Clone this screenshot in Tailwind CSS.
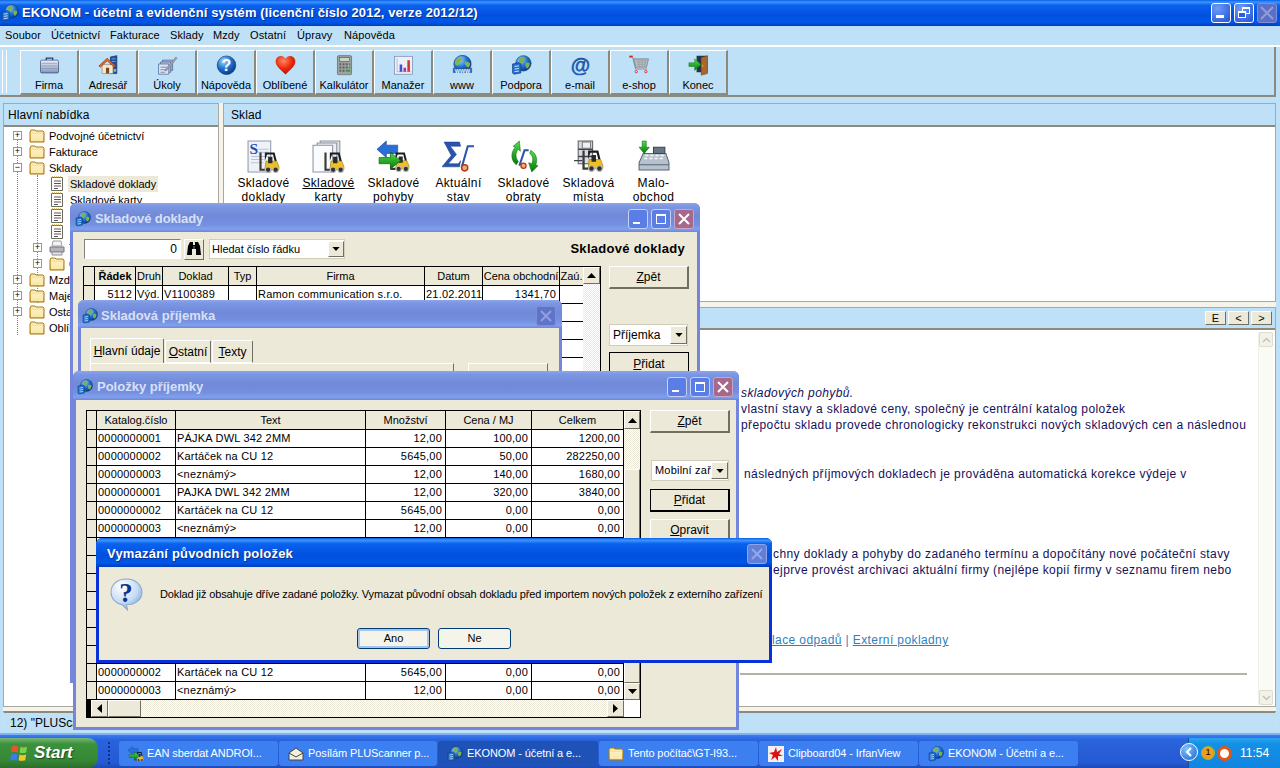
<!DOCTYPE html>
<html lang="cs">
<head>
    <meta charset="UTF-8">
    <title>EKONOM - účetní a evidenční systém</title>
    <script src="https://cdn.jsdelivr.net/npm/@tailwindcss/browser@4"></script>
</head>
<body class="bg-[#bfe1f8]">

<!-- icon sheet -->
<svg class="absolute w-0 h-0">
    <defs>
        <radialGradient id="gBlue" cx="35%" cy="28%" r="80%"><stop offset="0" stop-color="#a9d8fb"/><stop offset=".5" stop-color="#1f74cf"/><stop offset="1" stop-color="#0a3278"/></radialGradient>
        <radialGradient id="gRed" cx="40%" cy="25%" r="85%"><stop offset="0" stop-color="#ff8a60"/><stop offset=".5" stop-color="#ee2a10"/><stop offset="1" stop-color="#a80a00"/></radialGradient>
        <radialGradient id="gBubble" cx="35%" cy="25%" r="85%"><stop offset="0" stop-color="#ffffff"/><stop offset=".6" stop-color="#c5dcf5"/><stop offset="1" stop-color="#6f9fd8"/></radialGradient>
        <linearGradient id="gCase" x1="0" y1="0" x2="0" y2="1"><stop offset="0" stop-color="#eef2f9"/><stop offset="1" stop-color="#8296bb"/></linearGradient>
        <linearGradient id="gFolder" x1="0" y1="0" x2="0" y2="1"><stop offset="0" stop-color="#fff3bf"/><stop offset="1" stop-color="#eeb93f"/></linearGradient>
        <linearGradient id="gGreen" x1="0" y1="0" x2="0" y2="1"><stop offset="0" stop-color="#4fe04f"/><stop offset="1" stop-color="#067a06"/></linearGradient>

        <symbol id="appicon" viewBox="0 0 32 32">
            <circle cx="19" cy="13" r="12" fill="url(#gBlue)" stroke="#0b3b7c"/>
            <path d="M13 5c3-2 6-2 8 0 1 2-1 3-2 5s-3 3-5 2-3-5-1-7zM23 12c2-1 5 0 6 1 0 4-2 7-4 8-2-1-3-3-3-5s0-3 1-4z" fill="#7fb050"/>
            <path d="M2 14l10-2 3 2v14l-11 2-2-2z" fill="#1f6fd0" stroke="#0b3b7c"/>
            <path d="M5 18l7-1M5 22l7-1M5 26l7-1" stroke="#cfe6ff" stroke-width="1.5"/>
        </symbol>
        <symbol id="folder" viewBox="0 0 16 16">
            <path d="M1 4l1-2h4l1 1h7l1 1v10H1z" fill="url(#gFolder)" stroke="#a67a12"/>
            <path d="M2 6h12v7H2z" fill="#fff7d0" opacity=".7"/>
        </symbol>
        <symbol id="note" viewBox="0 0 14 16">
            <path d="M1.5 1.5h11v13h-11z" fill="#fff" stroke="#6b6b60"/>
            <path d="M2 1h1M4 1h1M6 1h1M8 1h1M10 1h1" stroke="#c9a23a" stroke-width="1.4"/>
            <path d="M4 5h7M4 7.5h7M4 10h7M4 12.5h4" stroke="#55554c"/>
        </symbol>
        <symbol id="printer" viewBox="0 0 16 16">
            <path d="M4 1h8l1 5H3z" fill="#f2f2f4" stroke="#a0a0a8"/>
            <path d="M1 7h14v5H1z" fill="#b5b5bd" stroke="#77777f"/>
            <path d="M3 12h10v3H3z" fill="#e5e5e8" stroke="#8e8e96"/>
        </symbol>
        <symbol id="case" viewBox="0 0 32 32">
            <path d="M11 8V5h10v3" fill="none" stroke="#2c3f6a" stroke-width="2"/>
            <rect x="2" y="8" width="28" height="20" rx="2" fill="url(#gCase)" stroke="#263a66"/>
            <path d="M4 13h24M4 17h24M4 21h24" stroke="#7f90b0"/>
        </symbol>
        <symbol id="house" viewBox="0 0 32 32">
            <path d="M19 3l10-2v28H19z" fill="#1c4f9f" stroke="#0e2e66"/>
            <path d="M21 6h6M21 10h6" stroke="#6ea3e0" stroke-width="1.5"/>
            <path d="M6 15h17v14H6z" fill="#f4ead4" stroke="#8f8168"/>
            <path d="M1 17L14 5l13 12-2 2L14 9 3 19z" fill="#e8692a" stroke="#8e3410"/>
            <path d="M12 20h5v9h-5z" fill="#7a4a25"/>
            <path d="M24 22h4v4h-4z" fill="#88c070"/>
        </symbol>
        <symbol id="tasks" viewBox="0 0 32 32">
            <path d="M8 8h16v16H8z" fill="#9fb1d6" stroke="#3f5688"/>
            <path d="M5 11h16v16H5z" fill="#bac8e4" stroke="#3f5688"/>
            <path d="M2 14h16v16H2z" fill="#dbe4f4" stroke="#3f5688"/>
            <path d="M5 19h10M5 23h10M5 27h7" stroke="#4b628f"/>
            <path d="M13 22L29 3l2 2-16 19-3 1z" fill="#a0a4ac" stroke="#5f636c" stroke-width=".6"/>
        </symbol>
        <symbol id="help" viewBox="0 0 32 32">
            <circle cx="16" cy="16" r="14.5" fill="url(#gBlue)" stroke="#0a357e"/>
            <text x="16" y="25" text-anchor="middle" font-family="Liberation Sans" font-weight="700" font-size="25" fill="#fff">?</text>
        </symbol>
        <symbol id="heart" viewBox="0 0 32 32">
            <path d="M16 30C8 22 1 17 1 10c0-5 4-8 8-8 3 0 6 2 7 5 1-3 4-5 7-5 4 0 8 3 8 8 0 7-7 12-15 20z" fill="url(#gRed)" stroke="#b81c08" stroke-width=".6"/>
        </symbol>
        <symbol id="calc" viewBox="0 0 32 32">
            <rect x="5" y="1" width="22" height="30" rx="2" fill="#9ea3a2" stroke="#55595a"/>
            <rect x="8" y="4" width="16" height="6" fill="#c9d4c4" stroke="#55595a"/>
            <path d="M8 13h3v3H8zM13 13h3v3h-3zM18 13h3v3h-3zM8 18h3v3H8zM13 18h3v3h-3zM18 18h3v3h-3zM8 23h3v3H8zM13 23h3v3h-3z" fill="#5c6160"/>
            <path d="M23 13h2v3h-2zM23 18h2v3h-2zM18 23h7v3h-7z" fill="#2f9a4a"/>
        </symbol>
        <symbol id="chart" viewBox="0 0 32 32">
            <rect x="2" y="2" width="28" height="28" fill="#eceff7" stroke="#6e7ea8"/>
            <path d="M6 5v21h22" fill="none" stroke="#9aa6c4"/>
            <path d="M10 15h4v11h-4z" fill="#3a53c4"/>
            <path d="M16 20h4v6h-4z" fill="#b12bb0"/>
            <path d="M22 8h4v18h-4z" fill="#d8342a"/>
        </symbol>
        <symbol id="www" viewBox="0 0 32 32">
            <circle cx="16" cy="14" r="13.5" fill="url(#gBlue)" stroke="#0b3b7c"/>
            <path d="M7 6c3-2 6-2 9 0 1 2-1 3-3 4s-2 5-4 6-5-1-5-3 1-5 3-7zM20 11c3-1 6 0 8 2 0 3-1 5-3 7-2-1-4-3-5-5s-1-3 0-4z" fill="#83b352"/>
            <rect x="1" y="20" width="30" height="8" fill="#1b5ca8" opacity=".85"/>
            <text x="16" y="27.5" text-anchor="middle" font-family="Liberation Sans" font-weight="700" font-size="10" fill="#e8f4ff">www</text>
        </symbol>
        <symbol id="at" viewBox="0 0 32 32">
            <text x="16" y="26" text-anchor="middle" font-family="Liberation Sans" font-weight="700" font-size="31" fill="#1a63c0" stroke="#0a2f72" stroke-width=".5">@</text>
        </symbol>
        <symbol id="cart" viewBox="0 0 32 32">
            <path d="M1 2h4l5 20h18" fill="none" stroke="#8a9096" stroke-width="1.6"/>
            <path d="M7 6h23l-3 13H10z" fill="#b6bbc1" stroke="#6e747a"/>
            <path d="M11 9h16M12 12h14M12 15h13M14 6l2 13M20 6v13M26 6l-2 13" stroke="#8c9298" stroke-width=".7"/>
            <path d="M0 1h5v3H0z" fill="#e02020"/>
            <circle cx="11" cy="26" r="1.8" fill="#fff" stroke="#d81818" stroke-width="1.4"/>
            <circle cx="26" cy="26" r="1.8" fill="#fff" stroke="#d81818" stroke-width="1.4"/>
        </symbol>
        <symbol id="door" viewBox="0 0 32 32">
            <path d="M13 1h17v26H13z" fill="#24344f"/>
            <path d="M20 4l10-3v28l-10 3z" fill="#a7672d" stroke="#5f3712" stroke-width=".6"/>
            <circle cx="22.5" cy="17" r="1" fill="#ffd76a"/>
            <path d="M1 12h9V6l10 9-10 9v-6H1z" fill="url(#gGreen)" stroke="#056005" stroke-width=".6"/>
        </symbol>
        <symbol id="fork" viewBox="0 0 20 20">
            <path d="M6 1h9l2 8h-2l-1.500-6H8L6 9z" fill="#1c1c1c"/>
            <path d="M7 9h10l2 5v3H6z" fill="#f0c020" stroke="#8a6a00" stroke-width=".5"/>
            <path d="M9 5h4v6H9z" fill="#2a2a2a"/>
            <path d="M1 1h2v15h3v2H1z" fill="#3a3a3a"/>
            <circle cx="9" cy="17" r="2.500" fill="#333" stroke="#bbb"/>
            <circle cx="16" cy="17" r="2.500" fill="#333" stroke="#bbb"/>
        </symbol>
        <symbol id="skdoc" viewBox="0 0 32 32">
            <path d="M1 1h22v30H1z" fill="#eef2f7" stroke="#8d9aae"/>
            <path d="M11 9h10M11 12h10M4 16h17M4 19h12M4 22h12" stroke="#b8c4d6"/>
            <text x="2.500" y="14" font-family="Liberation Serif" font-weight="700" font-size="15" fill="#1f4fb0">S</text>
            <use href="#fork" x="11" y="11" width="21" height="21"/>
        </symbol>
        <symbol id="skcard" viewBox="0 0 32 32">
            <path d="M8 1h19v24H8z" fill="#dfe3ea" stroke="#8d93a0"/>
            <path d="M5 3h19v25H5z" fill="#eceff4" stroke="#8d93a0"/>
            <path d="M1 5h19v26H1z" fill="#fafbfd" stroke="#8d93a0"/>
            <use href="#fork" x="11" y="11" width="21" height="21"/>
        </symbol>
        <symbol id="skmove" viewBox="0 0 32 32">
            <path d="M0 9l9-8v4h11v8H9v4z" fill="#2a6fd8" stroke="#0f3f90" stroke-width=".6"/>
            <use href="#fork" x="12" y="11" width="20" height="20"/>
            <path d="M2 17h11v-5l10 8-10 8v-5H2z" fill="url(#gGreen)" stroke="#056005" stroke-width=".6"/>
        </symbol>
        <symbol id="sigma" viewBox="0 0 32 32">
            <path d="M2 2h15l1 4H8l6 8-8 9h10l2-3-1 6H0l9-11z" fill="#2a55ae" stroke="#14357c" stroke-width=".5"/>
            <path d="M19 27L25 6h6" fill="none" stroke="#2a55ae" stroke-width="2"/>
            <circle cx="22" cy="27" r="3" fill="#e8b070" stroke="#b8341a" stroke-width="1.4"/>
        </symbol>
        <symbol id="turnover" viewBox="0 0 32 32">
            <path d="M12 1L6 6l2 1C3 13 4 20 9 24l2-3C8 17 8 12 11 9l2 2z" fill="url(#gGreen)" stroke="#056005" stroke-width=".5"/>
            <path d="M24 31l6-6-2-1c2-6 0-11-5-14l-1 3c3 2 4 6 2 10l-3-1z" fill="url(#gGreen)" stroke="#056005" stroke-width=".5"/>
            <path d="M12 25l5-15h4" fill="none" stroke="#2a55ae" stroke-width="2"/>
            <circle cx="16" cy="25" r="2.500" fill="#e8b070" stroke="#b8341a" stroke-width="1.2"/>
        </symbol>
        <symbol id="shelf" viewBox="0 0 32 32">
            <path d="M6 1h14v22H6z" fill="#d8dbe0" stroke="#5a5e66"/>
            <path d="M6 9h14M6 16h14M2 20h8" stroke="#3e4148" stroke-width="1.300"/>
            <path d="M10 2h8v6h-8z" fill="#eef0f4" stroke="#777"/>
            <use href="#fork" x="9" y="9" width="22" height="22"/>
        </symbol>
        <symbol id="till" viewBox="0 0 32 32">
            <path d="M2 22l4-9h22l3 9v7H2z" fill="#b8c2ce" stroke="#5a6676"/>
            <path d="M16 7h11v6H16z" fill="#687584" stroke="#3a4450"/>
            <path d="M8 15h3M13 15h3M18 15h3M23 15h3M7 18h3M12 18h3M17 18h3M22 18h3" stroke="#f4f6fa" stroke-width="1.500"/>
            <path d="M2 24h29" stroke="#5a6676"/>
            <path d="M5 1h4v6h3l-5 6-5-6h3z" fill="url(#gGreen)" stroke="#056005" stroke-width=".5"/>
        </symbol>
        <symbol id="binoc" viewBox="0 0 16 16">
            <path d="M2 5l2-4h3v3h2V1h3l2 4 1 9H10V8H6v6H1z" fill="#000"/>
            <path d="M7 5h2v3H7z" fill="#444"/>
        </symbol>
        <symbol id="bubble" viewBox="0 0 32 32">
            <path d="M16 1C7 1 1 6 1 14c0 6 5 11 11 12l5 5-1-5c8 0 15-5 15-12S25 1 16 1z" fill="url(#gBubble)" stroke="#8aa8cc"/>
            <text x="15.500" y="23" text-anchor="middle" font-family="Liberation Serif" font-weight="700" font-size="26" fill="#12318f">?</text>
        </symbol>
        <symbol id="down" viewBox="0 0 9 5"><path d="M0 0h9L4.500 5z" fill="#000"/></symbol>
        <symbol id="up" viewBox="0 0 9 5"><path d="M0 5h9L4.500 0z" fill="#000"/></symbol>
    </defs>
</svg>

<div class="relative w-[1280px] h-[768px] overflow-hidden flex flex-col font-['Liberation_Sans',sans-serif] text-[11px] text-black">

    <!-- Application title bar -->
    <div class="h-[26px] shrink-0 flex items-center pl-[1px] pr-[3px] bg-[linear-gradient(180deg,#0a5fe8_0%,#3d95ff_8%,#0a62ee_20%,#0050dd_60%,#0058e8_85%,#003dbb_100%)]">
        <svg class="w-[18px] h-[18px] mr-[3px]"><use href="#appicon"/></svg>
        <span class="text-white font-bold text-[13px] tracking-[0.1px] [text-shadow:1px_1px_0_#0a2f90]">EKONOM - účetní a evidenční systém (licenční číslo 2012, verze 2012/12)</span>
        <div class="ml-auto flex gap-[3px]">
            <div class="w-[20px] h-[20px] rounded-[3px] border border-white bg-[radial-gradient(circle_at_30%_25%,#6f9cf5,#1f52d8)] flex items-end p-[4px]"><div class="w-[8px] h-[3px] bg-white"></div></div>
            <div class="relative w-[20px] h-[20px] rounded-[3px] border border-white bg-[radial-gradient(circle_at_30%_25%,#6f9cf5,#1f52d8)]">
                <div class="absolute left-[7px] top-[3px] w-[8px] h-[7px] border border-white border-t-2"></div>
                <div class="absolute left-[3px] top-[7px] w-[8px] h-[7px] border border-white border-t-2 bg-[#2a5edc]"></div>
            </div>
            <div class="w-[20px] h-[20px] rounded-[3px] border border-[#7f90d8] bg-[#5a6fc8] flex items-center justify-center">
                <svg class="w-[14px] h-[14px]" viewBox="0 0 14 14"><path d="M1 1l12 12M13 1L1 13" stroke="#8f9ed8" stroke-width="2"/></svg>
            </div>
        </div>
    </div>

    <!-- Menu -->
    <div class="h-[19px] shrink-0 flex items-center pl-[5px] tracking-[0.1px]">
        <span class="w-[46px]">Soubor</span>
        <span class="w-[59px]">Účetnictví</span>
        <span class="w-[60px]">Fakturace</span>
        <span class="w-[43px]">Sklady</span>
        <span class="w-[37px]">Mzdy</span>
        <span class="w-[47px]">Ostatní</span>
        <span class="w-[47px]">Úpravy</span>
        <span>Nápověda</span>
    </div>
    <div class="h-[2px] shrink-0 bg-white"></div>

    <!-- Toolbar -->
    <div class="h-[50px] shrink-0 mr-[4px] flex pt-[3px] pb-[2px] border-r-2 border-b-2 border-[#8c8a7c] relative">
        <div class="w-[5px] ml-[2px] mr-[13px] border-x border-white"></div>
        <div id="toolbar" class="flex">
            <a class="w-[59px] h-[45px] flex flex-col items-center border-t border-l border-white border-r-2 border-r-[#8c8a7c] border-b-2 border-b-[#8c8a7c]"><svg class="w-[27px] h-[27px] mt-[4px]"><use href="#case"/></svg><span class="mt-[1px]">Firma</span></a>
            <a class="w-[59px] h-[45px] flex flex-col items-center border-t border-l border-white border-r-2 border-r-[#8c8a7c] border-b-2 border-b-[#8c8a7c]"><svg class="w-[27px] h-[27px] mt-[4px]"><use href="#house"/></svg><span class="mt-[1px]">Adresář</span></a>
            <a class="w-[59px] h-[45px] flex flex-col items-center border-t border-l border-white border-r-2 border-r-[#8c8a7c] border-b-2 border-b-[#8c8a7c]"><svg class="w-[27px] h-[27px] mt-[4px]"><use href="#tasks"/></svg><span class="mt-[1px]">Úkoly</span></a>
            <a class="w-[59px] h-[45px] flex flex-col items-center border-t border-l border-white border-r-2 border-r-[#8c8a7c] border-b-2 border-b-[#8c8a7c]"><svg class="w-[27px] h-[27px] mt-[4px]"><use href="#help"/></svg><span class="mt-[1px]">Nápověda</span></a>
            <a class="w-[59px] h-[45px] flex flex-col items-center border-t border-l border-white border-r-2 border-r-[#8c8a7c] border-b-2 border-b-[#8c8a7c]"><svg class="w-[27px] h-[27px] mt-[4px]"><use href="#heart"/></svg><span class="mt-[1px]">Oblíbené</span></a>
            <a class="w-[59px] h-[45px] flex flex-col items-center border-t border-l border-white border-r-2 border-r-[#8c8a7c] border-b-2 border-b-[#8c8a7c]"><svg class="w-[27px] h-[27px] mt-[4px]"><use href="#calc"/></svg><span class="mt-[1px]">Kalkulátor</span></a>
            <a class="w-[59px] h-[45px] flex flex-col items-center border-t border-l border-white border-r-2 border-r-[#8c8a7c] border-b-2 border-b-[#8c8a7c]"><svg class="w-[27px] h-[27px] mt-[4px]"><use href="#chart"/></svg><span class="mt-[1px]">Manažer</span></a>
            <a class="w-[59px] h-[45px] flex flex-col items-center border-t border-l border-white border-r-2 border-r-[#8c8a7c] border-b-2 border-b-[#8c8a7c]"><svg class="w-[27px] h-[27px] mt-[4px]"><use href="#www"/></svg><span class="mt-[1px]">www</span></a>
            <a class="w-[59px] h-[45px] flex flex-col items-center border-t border-l border-white border-r-2 border-r-[#8c8a7c] border-b-2 border-b-[#8c8a7c]"><svg class="w-[27px] h-[27px] mt-[4px]"><use href="#appicon"/></svg><span class="mt-[1px]">Podpora</span></a>
            <a class="w-[59px] h-[45px] flex flex-col items-center border-t border-l border-white border-r-2 border-r-[#8c8a7c] border-b-2 border-b-[#8c8a7c]"><svg class="w-[27px] h-[27px] mt-[4px]"><use href="#at"/></svg><span class="mt-[1px]">e-mail</span></a>
            <a class="w-[59px] h-[45px] flex flex-col items-center border-t border-l border-white border-r-2 border-r-[#8c8a7c] border-b-2 border-b-[#8c8a7c]"><svg class="w-[27px] h-[27px] mt-[4px]"><use href="#cart"/></svg><span class="mt-[1px]">e-shop</span></a>
            <a class="w-[59px] h-[45px] flex flex-col items-center border-t border-l border-white border-r-2 border-r-[#8c8a7c] border-b-2 border-b-[#8c8a7c]"><svg class="w-[27px] h-[27px] mt-[4px]"><use href="#door"/></svg><span class="mt-[1px]">Konec</span></a>
        </div>
    </div>

    <!-- Main area: left tree, right panels -->
    <div class="h-[608px] shrink-0 mt-[6px] ml-[3px] mr-[4px] pb-[4px] flex gap-[4px] bg-[#f6f4ea]">
        <div class="w-[216px] shrink-0 flex flex-col border border-[#a8a89c]">
            <div class="h-[23px] shrink-0 bg-[#bfe1f8] border-b-2 border-[#8c8a7c] pl-[4px] flex items-center text-[12px] tracking-[0.1px]">Hlavní nabídka</div>
            <div class="relative flex-1 bg-white pt-[1px] text-[11px]">
                <div class="absolute left-[13px] top-[8px] h-[200px] border-l border-dotted border-[#808080]"></div>
                <div class="absolute left-[33px] top-[48px] h-[128px] border-l border-dotted border-[#808080]"></div>
                <div id="tree" class="relative"></div>
            </div>
        </div>
        <div class="flex-1 flex flex-col">
            <div class="border border-[#a8a89c] h-[199px] flex flex-col">
                <div class="h-[23px] shrink-0 bg-[#bfe1f8] border-b-2 border-[#8c8a7c] pl-[7px] flex items-center text-[12px] tracking-[0.1px]">Sklad</div>
                <div class="flex-1 bg-white pl-[7px] pt-[13px] flex text-[12px] tracking-[0.35px] leading-[14px] text-center overflow-hidden">
                    <div class="w-[65px] flex flex-col items-center"><svg class="w-[33px] h-[33px] mb-[3px]"><use href="#skdoc"/></svg><span>Skladové<br>doklady</span></div>
                    <div class="w-[65px] flex flex-col items-center"><svg class="w-[33px] h-[33px] mb-[3px]"><use href="#skcard"/></svg><span><span class="underline">Skladové</span><br>karty</span></div>
                    <div class="w-[65px] flex flex-col items-center"><svg class="w-[33px] h-[33px] mb-[3px]"><use href="#skmove"/></svg><span>Skladové<br>pohyby</span></div>
                    <div class="w-[65px] flex flex-col items-center"><svg class="w-[33px] h-[33px] mb-[3px]"><use href="#sigma"/></svg><span>Aktuální<br>stav</span></div>
                    <div class="w-[65px] flex flex-col items-center"><svg class="w-[33px] h-[33px] mb-[3px]"><use href="#turnover"/></svg><span>Skladové<br>obraty</span></div>
                    <div class="w-[65px] flex flex-col items-center"><svg class="w-[33px] h-[33px] mb-[3px]"><use href="#shelf"/></svg><span>Skladová<br>místa</span></div>
                    <div class="w-[65px] flex flex-col items-center"><svg class="w-[33px] h-[33px] mb-[3px]"><use href="#till"/></svg><span>Malo-<br>obchod</span></div>
                </div>
            </div>
            <div class="mt-[5px] flex-1 min-h-0 border border-[#a8a89c] flex flex-col">
                <div class="h-[22px] shrink-0 bg-[#bfe1f8] border-b-2 border-[#8c8a7c] flex items-center justify-end gap-[2px] pr-[3px]">
                    <div class="w-[21px] h-[14px] bg-[#ece9d8] border border-t-white border-l-white border-r-[#716f64] border-b-[#716f64] flex items-center justify-center text-[11px]">E</div>
                    <div class="w-[21px] h-[14px] bg-[#ece9d8] border border-t-white border-l-white border-r-[#716f64] border-b-[#716f64] flex items-center justify-center text-[11px]">&lt;</div>
                    <div class="w-[21px] h-[14px] bg-[#ece9d8] border border-t-white border-l-white border-r-[#716f64] border-b-[#716f64] flex items-center justify-center text-[11px]">&gt;</div>
                </div>
                <div class="flex-1 min-h-0 bg-white flex">
                    <div class="flex-1 min-w-0 text-[12px] leading-[16px] text-[#14105a] tracking-[0.4px] whitespace-nowrap">
                        <p class="pt-[55px] pl-[517px] italic">skladových pohybů.</p>
                        <p class="pl-[517px]">vlastní stavy a skladové ceny, společný je centrální katalog položek</p>
                        <p class="pl-[517px]">přepočtu skladu provede chronologicky rekonstrukci nových skladových cen a následnou</p>
                        <p class="pt-[33px] pl-[520px]">následných příjmových dokladech je prováděna automatická korekce výdeje v</p>
                        <p class="pt-[64px] pl-[549px]">chny doklady a pohyby do zadaného termínu a dopočítány nové počáteční stavy</p>
                        <p class="pl-[549px]">ejprve provést archivaci aktuální firmy (nejlépe kopií firmy v seznamu firem nebo</p>
                        <p class="pt-[54px] pl-[548px] text-[#2f7fc0]"><a class="underline">lace odpadů</a> | <a class="underline">Externí pokladny</a></p>
                        <div class="mt-[25px] ml-[516px] mr-[11px] h-[2px] bg-[#b5b2a0]"></div>
                    </div>
                    <div class="w-[15px] shrink-0 mr-[2px] mt-[2px] mb-[1px] flex flex-col justify-between bg-[#fbfbf5] border-l border-[#f0efe6]">
                        <div class="h-[15px] bg-[#f3f2e8] border border-[#dedcd0] rounded-[2px] flex items-center justify-center"><svg class="w-[9px] h-[6px]" viewBox="0 0 9 6"><path d="M1 5l3.500-3.500L8 5" fill="none" stroke="#c4c3b5" stroke-width="1.500"/></svg></div>
                        <div class="h-[15px] bg-[#f3f2e8] border border-[#dedcd0] rounded-[2px] flex items-center justify-center"><svg class="w-[9px] h-[6px]" viewBox="0 0 9 6"><path d="M1 1l3.500 3.500L8 1" fill="none" stroke="#c4c3b5" stroke-width="1.500"/></svg></div>
                    </div>
                </div>
            </div>
        </div>
    </div>

    <!-- Status bar -->
    <div class="h-[22px] shrink-0 ml-[3px] mr-[4px] border-t-2 border-[#8c8a7c] border-x border-x-[#dedcd0] pl-[6px] flex items-center text-[12px]">12) "PLUScanner"</div>

    <!-- Taskbar -->
    <div class="h-[35px] shrink-0 flex items-end border-t-2 border-[#7fb0f5] bg-[linear-gradient(180deg,#3a7cf0_0%,#2a63dc_15%,#2459d2_85%,#1d49b4_100%)] text-white text-[11px] tracking-[-0.1px] whitespace-nowrap relative">
        <div class="w-[98px] h-[30px] rounded-r-[10px] bg-[linear-gradient(180deg,#79b679_0%,#3c923c_20%,#358735_75%,#2c6c2c_100%)] flex items-center pl-[10px] gap-[5px] shrink-0">
            <svg class="w-[19px] h-[19px]" viewBox="0 0 20 20"><path d="M2 3c3-2 5-1 7 0L8 9C6 8 4 8 1 9z" fill="#e8552a"/><path d="M11 3c2 1 4 1 7 0l-1 6c-3 1-5 1-7 0z" fill="#7ed04a"/><path d="M1 11c3-1 5-1 7 0l-1 7c-2-2-4-2-7 0z" fill="#3a7cf0"/><path d="M10 11c2 1 4 1 7 0l-1 6c-3 1-5 1-7 0z" fill="#f4c62a"/></svg>
            <span class="italic font-bold text-[17px] tracking-normal [text-shadow:1px_1px_1px_#1c4a1c]">Start</span>
        </div>
        <div class="w-[21px] h-[33px] shrink-0 pl-[10px] pt-[7px] flex flex-col gap-[2px]">
            <i class="w-[2px] h-[2px] bg-[#0f2f8a]"></i><i class="w-[2px] h-[2px] bg-[#0f2f8a]"></i><i class="w-[2px] h-[2px] bg-[#0f2f8a]"></i><i class="w-[2px] h-[2px] bg-[#0f2f8a]"></i><i class="w-[2px] h-[2px] bg-[#0f2f8a]"></i><i class="w-[2px] h-[2px] bg-[#0f2f8a]"></i>
        </div>
        <div class="flex gap-[1px] mb-[2px]">
            <div class="w-[159px] h-[25px] rounded-[3px] bg-[#3c7ff0] flex items-center pl-[9px] gap-[3px]"><svg class="w-[16px] h-[16px] shrink-0"><use href="#skmove"/></svg><span>EAN sberdat ANDROI...</span></div>
            <div class="w-[158px] h-[25px] rounded-[3px] bg-[#3c7ff0] flex items-center pl-[9px] gap-[4px]"><svg class="w-[16px] h-[16px] shrink-0" viewBox="0 0 16 16"><path d="M1 7l7-5 7 5v7H1z" fill="#f4f0e0" stroke="#444"/><path d="M1 7l7 4 7-4" fill="none" stroke="#444"/></svg><span>Posílám PLUScanner p...</span></div>
            <div class="w-[160px] h-[25px] rounded-[3px] bg-[#1e52b7] flex items-center pl-[9px] gap-[4px]"><svg class="w-[16px] h-[16px] shrink-0"><use href="#appicon"/></svg><span>EKONOM - účetní a e...</span></div>
            <div class="w-[159px] h-[25px] rounded-[3px] bg-[#3c7ff0] flex items-center pl-[9px] gap-[4px]"><svg class="w-[16px] h-[16px] shrink-0"><use href="#folder"/></svg><span>Tento počítač\GT-I93...</span></div>
            <div class="w-[159px] h-[25px] rounded-[3px] bg-[#3c7ff0] flex items-center pl-[9px] gap-[4px]"><svg class="w-[16px] h-[16px] shrink-0" viewBox="0 0 16 16"><rect width="16" height="16" fill="#f5f0f0"/><path d="M8 1l1 5 5-3-3 5 4 2-5 0 0 5-3-4-4 3 2-5-4-2 5-1z" fill="#e01010"/></svg><span>Clipboard04 - IrfanView</span></div>
            <div class="w-[159px] h-[25px] rounded-[3px] bg-[#3c7ff0] flex items-center pl-[9px] gap-[4px]"><svg class="w-[16px] h-[16px] shrink-0"><use href="#appicon"/></svg><span>EKONOM - Účetní a e...</span></div>
        </div>
        <div class="ml-auto w-[92px] h-[30px] shrink-0 bg-[linear-gradient(180deg,#2aa5ee_0%,#1390e6_20%,#1285df_100%)] border-l border-[#0f4fa8] flex items-center relative">
            <div class="absolute -left-[9px] top-[5px] w-[18px] h-[18px] rounded-full border border-white bg-[radial-gradient(circle_at_35%_30%,#7fc4ff,#1462d0)] flex items-center justify-center">
                <svg class="w-[8px] h-[10px]" viewBox="0 0 8 10"><path d="M6 1L2 5l4 4" fill="none" stroke="#fff" stroke-width="2"/></svg>
            </div>
            <div class="ml-[12px] w-[14px] h-[14px] rounded-full bg-[#f59a1a] border border-[#8ac040] text-[9px] text-black flex items-center justify-center">1</div>
            <div class="ml-[2px] w-[15px] h-[15px] rounded-full bg-white border-[3px] border-[#e0561a]"></div>
            <span class="ml-[8px] text-[12px] tracking-normal">11:54</span>
        </div>
    </div>

    <!-- Window: Skladové doklady -->
    <div class="absolute left-[70px] top-[203px] w-[630px] h-[480px] bg-[#7385dc] rounded-t-[6px] pb-[3px] px-[3px] flex flex-col">
        <div class="h-[29px] shrink-0 -mx-[3px] pl-[5px] pr-[4px] pt-[2px] rounded-t-[6px] flex items-center bg-[linear-gradient(180deg,#8fa5ea_0%,#7b96e2_12%,#7089d8_45%,#7590e0_75%,#80a0ec_90%,#6a86d8_100%)]">
            <svg class="w-[16px] h-[16px] mr-[4px]"><use href="#appicon"/></svg>
            <span class="text-[#d8e0f6] font-bold text-[13px] tracking-[-0.1px]">Skladové doklady</span>
            <div class="ml-auto mr-[2px] flex gap-[3px]">
                <div class="w-[20px] h-[20px] rounded-[3px] border border-[#c4d0f4] bg-[#5a7ee6] flex items-end p-[4px]"><div class="w-[7px] h-[2px] bg-white"></div></div>
                <div class="w-[20px] h-[20px] rounded-[3px] border border-[#c4d0f4] bg-[#5a7ee6] p-[4px]"><div class="w-full h-full border border-white border-t-2"></div></div>
                <div class="w-[20px] h-[20px] rounded-[3px] border border-[#c4a8c4] bg-[#a8688c] flex items-center justify-center"><svg class="w-[12px] h-[12px]" viewBox="0 0 12 12"><path d="M1 1l10 10M11 1L1 11" stroke="#fff" stroke-width="2"/></svg></div>
            </div>
        </div>
        <div class="flex-1 bg-[#ece9d8] pl-[10px] pt-[7px] flex flex-col">
            <div class="flex items-center h-[20px] pl-[1px]">
                <div class="w-[97px] h-[20px] bg-white border border-t-[#808080] border-l-[#808080] border-white text-right pr-[3px] text-[12px]">0</div>
                <div class="ml-[3px] w-[20px] h-[21px] bg-[#ece9d8] border border-t-white border-l-white border-r-[#716f64] border-b-[#716f64] flex items-center justify-center"><svg class="w-[16px] h-[16px]"><use href="#binoc"/></svg></div>
                <div class="ml-[5px] w-[136px] h-[20px] bg-white border border-[#d0cdb8] flex items-center pl-[2px] text-[11px]">Hledat číslo řádku
                    <div class="ml-auto w-[16px] h-[16px] bg-[#ece9d8] border border-t-white border-l-white border-r-[#716f64] border-b-[#716f64] flex items-center justify-center"><svg class="w-[8px] h-[4px]"><use href="#down"/></svg></div>
                </div>
                <span class="ml-auto mr-[12px] font-bold text-[13px] tracking-[0.3px]">Skladové doklady</span>
            </div>
            <div class="flex mt-[7px]">
                <div class="w-[518px] h-[110px] border border-black flex overflow-hidden">
                    <div id="grid1" class="w-[499px] shrink-0"></div>
                    <div class="w-[17px] flex flex-col bg-[repeating-conic-gradient(#ece9d8_0_25%,#fff_0_50%)] bg-[length:2px_2px]">
                        <div class="h-[17px] bg-[#ece9d8] border border-t-white border-l-white border-r-[#716f64] border-b-[#716f64] flex items-center justify-center"><svg class="w-[9px] h-[5px]"><use href="#up"/></svg></div>
                    </div>
                </div>
                <div class="ml-[8px] w-[80px] flex flex-col">
                    <div class="h-[23px] bg-[#ece9d8] border border-t-white border-l-white border-r-[#716f64] border-b-[#716f64] border-b-2 border-r-2 flex items-center justify-center text-[12px]"><span><span class="underline">Z</span>pět</span></div>
                    <div class="mt-[35px] w-[79px] h-[22px] bg-white border border-[#d0cdb8] flex items-center pl-[3px] text-[12px]">Příjemka
                        <div class="ml-auto w-[17px] h-[18px] bg-[#ece9d8] border border-t-white border-l-white border-r-[#716f64] border-b-[#716f64] flex items-center justify-center"><svg class="w-[8px] h-[4px]"><use href="#down"/></svg></div>
                    </div>
                    <div class="mt-[6px] h-[24px] bg-[#ece9d8] border border-black flex items-center justify-center text-[12px]"><span><span class="underline">P</span>řidat</span></div>
                </div>
            </div>
        </div>
    </div>

    <!-- Window: Skladová příjemka -->
    <div class="absolute left-[78px] top-[300px] w-[484px] h-[90px] bg-[#7385dc] rounded-t-[6px] px-[3px] flex flex-col">
        <div class="h-[28px] shrink-0 -mx-[3px] px-[4px] pt-[3px] rounded-t-[6px] flex items-center bg-[linear-gradient(180deg,#8fa5ea_0%,#7b96e2_12%,#7089d8_45%,#7590e0_75%,#80a0ec_90%,#6a86d8_100%)]">
            <svg class="w-[16px] h-[16px] mr-[3px]"><use href="#appicon"/></svg>
            <span class="text-[#d8e0f6] font-bold text-[13px]">Skladová příjemka</span>
            <div class="ml-auto mr-[2px] w-[20px] h-[20px] rounded-[3px] border border-[#7e8fd8] bg-[#5f74c8] flex items-center justify-center"><svg class="w-[12px] h-[12px]" viewBox="0 0 12 12"><path d="M1 1l10 10M11 1L1 11" stroke="#93a0dc" stroke-width="2"/></svg></div>
        </div>
        <div class="flex-1 bg-[#ece9d8] pl-[9px] pt-[10px] text-[12px]">
            <div class="flex items-end h-[25px]">
                <div class="w-[74px] h-[25px] rounded-t-[2px] border border-b-0 border-t-white border-l-white border-r-[#716f64] flex items-center justify-center"><span><span class="underline">H</span>lavní údaje</span></div>
                <div class="ml-[1px] w-[46px] h-[23px] rounded-t-[2px] border border-white border-r-[#716f64] flex items-center justify-center"><span><span class="underline">O</span>statní</span></div>
                <div class="ml-[1px] w-[41px] h-[23px] rounded-t-[2px] border border-white border-r-[#716f64] flex items-center justify-center"><span><span class="underline">T</span>exty</span></div>
            </div>
            <div class="flex">
                <div class="w-[364px] h-[20px] border-l border-t border-white border-r border-r-[#716f64]"></div>
                <div class="ml-[14px] w-[80px] h-[20px] border-l border-t border-white border-r border-r-[#716f64]"></div>
            </div>
        </div>
    </div>

    <!-- Window: Položky příjemky -->
    <div class="absolute left-[73px] top-[371px] w-[666px] h-[359px] bg-[#7385dc] rounded-t-[6px] pb-[3px] px-[3px] flex flex-col">
        <div class="h-[29px] shrink-0 -mx-[3px] px-[4px] pt-[3px] rounded-t-[6px] flex items-center bg-[linear-gradient(180deg,#8fa5ea_0%,#7b96e2_12%,#7089d8_45%,#7590e0_75%,#80a0ec_90%,#6a86d8_100%)]">
            <svg class="w-[16px] h-[16px] mr-[4px]"><use href="#appicon"/></svg>
            <span class="text-[#d8e0f6] font-bold text-[13px]">Položky příjemky</span>
            <div class="ml-auto mr-[2px] flex gap-[3px]">
                <div class="w-[20px] h-[20px] rounded-[3px] border border-[#c4d0f4] bg-[#5a7ee6] flex items-end p-[4px]"><div class="w-[7px] h-[2px] bg-white"></div></div>
                <div class="w-[20px] h-[20px] rounded-[3px] border border-[#c4d0f4] bg-[#5a7ee6] p-[4px]"><div class="w-full h-full border border-white border-t-2"></div></div>
                <div class="w-[20px] h-[20px] rounded-[3px] border border-[#c4a8c4] bg-[#a8688c] flex items-center justify-center"><svg class="w-[12px] h-[12px]" viewBox="0 0 12 12"><path d="M1 1l10 10M11 1L1 11" stroke="#fff" stroke-width="2"/></svg></div>
            </div>
        </div>
        <div class="flex-1 bg-[#ece9d8] pl-[10px] pt-[10px] flex">
            <div class="w-[555px] h-[308px] border border-black flex flex-wrap content-start bg-white">
                <div id="grid3" class="w-[537px]"></div>
                <div class="w-[16px] h-[289px] flex flex-col bg-[repeating-conic-gradient(#ece9d8_0_25%,#fff_0_50%)] bg-[length:2px_2px]">
                    <div class="h-[18px] bg-[#ece9d8] border border-t-white border-l-white border-r-[#716f64] border-b-[#716f64] flex items-center justify-center"><svg class="w-[9px] h-[5px]"><use href="#up"/></svg></div>
                    <div class="mt-[40px] h-[214px] bg-[#ece9d8] border border-t-white border-l-white border-r-[#716f64] border-b-[#716f64]"></div>
                    <div class="mt-auto h-[17px] bg-[#ece9d8] border border-t-white border-l-white border-r-[#716f64] border-b-[#716f64] flex items-center justify-center"><svg class="w-[9px] h-[5px]"><use href="#down"/></svg></div>
                </div>
                <div class="w-[537px] h-[17px] flex bg-[repeating-conic-gradient(#ece9d8_0_25%,#fff_0_50%)] bg-[length:2px_2px]">
                    <div class="w-[4px] bg-black"></div>
                    <div class="w-[17px] bg-[#ece9d8] border border-t-white border-l-white border-r-[#716f64] border-b-[#716f64] flex items-center justify-center"><svg class="w-[5px] h-[9px]" viewBox="0 0 5 9"><path d="M5 0v9L0 4.500z"/></svg></div>
                    <div class="w-[33px] bg-[#ece9d8] border border-t-white border-l-white border-r-[#716f64] border-b-[#716f64]"></div>
                    <div class="ml-auto w-[17px] bg-[#ece9d8] border border-t-white border-l-white border-r-[#716f64] border-b-[#716f64] flex items-center justify-center"><svg class="w-[5px] h-[9px]" viewBox="0 0 5 9"><path d="M0 0v9l5-4.500z"/></svg></div>
                </div>
            </div>
            <div class="ml-[9px] w-[80px] flex flex-col">
                <div class="h-[23px] bg-[#ece9d8] border border-t-white border-l-white border-r-2 border-b-2 border-r-[#716f64] border-b-[#716f64] flex items-center justify-center text-[12px]"><span><span class="underline">Z</span>pět</span></div>
                <div class="mt-[27px] w-[78px] ml-[1px] h-[21px] bg-white border border-[#d0cdb8] flex items-center pl-[3px] text-[11px] tracking-[0.2px] overflow-hidden whitespace-nowrap"><span class="w-[57px] overflow-hidden">Mobilní zařízení</span>
                    <div class="ml-auto w-[17px] h-[17px] shrink-0 bg-[#ece9d8] border border-t-white border-l-white border-r-[#716f64] border-b-[#716f64] flex items-center justify-center"><svg class="w-[8px] h-[4px]"><use href="#down"/></svg></div>
                </div>
                <div class="mt-[8px] h-[23px] bg-[#ece9d8] border border-black border-r-2 border-b-2 flex items-center justify-center text-[12px]"><span><span class="underline">P</span>řidat</span></div>
                <div class="mt-[7px] h-[23px] bg-[#ece9d8] border border-t-white border-l-white border-r-2 border-b-2 border-r-[#716f64] border-b-[#716f64] flex items-center justify-center text-[12px]"><span><span class="underline">O</span>pravit</span></div>
            </div>
        </div>
    </div>

    <!-- Dialog: Vymazání původních položek -->
    <div class="absolute left-[96px] top-[538px] w-[676px] h-[125px] bg-[#0831d9] rounded-t-[6px] px-[3px] pb-[3px] flex flex-col">
        <div class="h-[29px] shrink-0 -mx-[3px] pl-[11px] pr-[5px] pt-[2px] rounded-t-[6px] flex items-center bg-[linear-gradient(180deg,#0a5fe8_0%,#3d95ff_8%,#0a62ee_20%,#0050dd_60%,#0058e8_85%,#003dbb_100%)]">
            <span class="text-white font-bold text-[13px] tracking-[0.2px] [text-shadow:1px_1px_0_#0a2f90]">Vymazání původních položek</span>
            <div class="ml-auto w-[20px] h-[20px] rounded-[3px] border border-[#8fa4ea] bg-[#5f7fd8] flex items-center justify-center"><svg class="w-[12px] h-[12px]" viewBox="0 0 12 12"><path d="M1 1l10 10M11 1L1 11" stroke="#96a8e4" stroke-width="2"/></svg></div>
        </div>
        <div class="flex-1 bg-[#ece9d8] flex flex-col">
            <div class="flex items-center pl-[11px] pt-[11px]">
                <svg class="w-[33px] h-[33px] shrink-0"><use href="#bubble"/></svg>
                <span class="ml-[17px] tracking-[-0.14px] whitespace-nowrap">Doklad již obsahuje dříve zadané položky. Vymazat původní obsah dokladu před importem nových položek z externího zařízení</span>
            </div>
            <div class="flex justify-center gap-[8px] mt-[17px]">
                <div class="w-[73px] h-[21px] rounded-[3px] border border-[#003c74] shadow-[inset_0_0_0_2px_#a8c4ec] bg-[#f5f4ea] flex items-center justify-center">Ano</div>
                <div class="w-[73px] h-[21px] rounded-[3px] border border-[#003c74] bg-[#f5f4ea] flex items-center justify-center">Ne</div>
            </div>
        </div>
    </div>
</div>

<script>
    // --- TREE ---
    const treeRows = [
        { box: '+', icon: 'folder', text: 'Podvojné účetnictví' },
        { box: '+', icon: 'folder', text: 'Fakturace' },
        { box: '-', icon: 'folder', text: 'Sklady' },
        { icon: 'note', text: 'Skladové doklady', sub: true, active: true },
        { icon: 'note', text: 'Skladové karty', sub: true },
        { icon: 'note', text: 'Skladové pohyby', sub: true },
        { icon: 'note', text: 'Aktuální stav', sub: true },
        { box: '+', icon: 'printer', text: 'Tisky', mid: true },
        { box: '+', icon: 'folder', text: 'Číselníky', mid: true },
        { box: '+', icon: 'folder', text: 'Mzdy' },
        { box: '+', icon: 'folder', text: 'Majetek' },
        { box: '+', icon: 'folder', text: 'Ostatní' },
        { icon: 'folder', text: 'Oblíbené' }
    ];
    document.getElementById('tree').innerHTML = treeRows.map((row) => {
        const left = row.sub ? 'pl-[46px]' : row.mid ? 'pl-[45px]' : 'pl-[25px]';
        const boxLeft = row.mid ? 'ml-[29px]' : 'ml-[9px]';
        const icon = row.icon === 'note' ? '<svg class="w-[14px] h-[16px] shrink-0"><use href="#note"/></svg>'
            : `<svg class="w-[16px] h-[16px] shrink-0"><use href="#${row.icon}"/></svg>`;
        const label = row.active ? 'ml-[4px] px-[2px] bg-[#ece9d8]' : row.sub ? 'ml-[4px] px-[2px]' : 'ml-[4px]';
        const box = row.box ? `<span class="absolute top-[3px] left-0 ${boxLeft} w-[9px] h-[9px] bg-white border border-[#7f9db9] flex items-center justify-center text-[9px] leading-[7px]">${row.box === '+' ? '+' : '−'}</span>` : '';
        return `<div class="relative h-[16px] flex items-center ${left}">${box}${icon}<span class="${label} leading-[16px] whitespace-nowrap">${row.text}</span></div>`;
    }).join('');

    // --- GRIDS ---
    const headCell = 'h-full shrink-0 border-r border-b border-black bg-[#ece9d8] flex items-center justify-center whitespace-nowrap';
    const rowCell = 'h-[18px] shrink-0 border-r border-b border-black px-[1px] leading-[17px] whitespace-nowrap overflow-hidden tracking-[0.2px]';

    const grid1Cols = ['w-[11px]', 'w-[41px]', 'w-[27px]', 'w-[66px]', 'w-[28px]', 'w-[168px]', 'w-[58px]', 'w-[77px]', 'w-[24px]'];
    const grid1Head = ['', 'Řádek', 'Druh', 'Doklad', 'Typ', 'Firma', 'Datum', 'Cena obchodní', 'Zaú.'];
    const grid1First = ['', '5112', 'Výd.', 'V1100389', '', 'Ramon communication s.r.o.', '21.02.2011', '1341,70', ''];
    const alignRight1 = [1, 7];
    let g1 = '<div class="flex h-[19px]">' + grid1Head.map((h, i) => `<div class="${headCell} ${grid1Cols[i]} ${i === 1 ? 'font-bold' : ''}">${h}</div>`).join('') + '</div>';
    for (let r = 0; r < 5; r++) {
        g1 += '<div class="flex">' + grid1First.map((t, i) => {
            const bg = i === 0 ? 'bg-[#ece9d8]' : 'bg-white';
            const al = alignRight1.includes(i) ? 'text-right pr-[3px]' : '';
            return `<div class="${rowCell} ${grid1Cols[i]} ${bg} ${al}">${r === 0 ? t : ''}</div>`;
        }).join('') + '</div>';
    }
    document.getElementById('grid1').innerHTML = g1;

    const grid3Cols = ['w-[10px]', 'w-[79px]', 'w-[190px]', 'w-[80px]', 'w-[86px]', 'w-[92px]'];
    const grid3Head = ['', 'Katalog.číslo', 'Text', 'Množství', 'Cena / MJ', 'Celkem'];
    const items = [
        ['0000000001', 'PÁJKA DWL 342 2MM', '12,00', '100,00', '1200,00'],
        ['0000000002', 'Kartáček na CU 12', '5645,00', '50,00', '282250,00'],
        ['0000000003', '&lt;neznámý&gt;', '12,00', '140,00', '1680,00'],
        ['0000000001', 'PAJKA DWL 342 2MM', '12,00', '320,00', '3840,00'],
        ['0000000002', 'Kartáček na CU 12', '5645,00', '0,00', '0,00'],
        ['0000000003', '&lt;neznámý&gt;', '12,00', '0,00', '0,00']
    ];
    while (items.length < 15) {
        const src = items[items.length - 3];
        items.push([src[0], src[1], src[2], '0,00', '0,00']);
    }
    let g3 = '<div class="flex h-[19px]">' + grid3Head.map((h, i) => `<div class="${headCell} ${grid3Cols[i]}">${h}</div>`).join('') + '</div>';
    items.forEach((row) => {
        g3 += `<div class="flex"><div class="${rowCell} ${grid3Cols[0]} bg-[#ece9d8]"></div>` + row.map((t, i) => {
            const al = i >= 2 ? 'text-right pr-[3px]' : '';
            return `<div class="${rowCell} ${grid3Cols[i + 1]} bg-white ${al}">${t}</div>`;
        }).join('') + '</div>';
    });
    document.getElementById('grid3').innerHTML = g3;
</script>
</body>
</html>
